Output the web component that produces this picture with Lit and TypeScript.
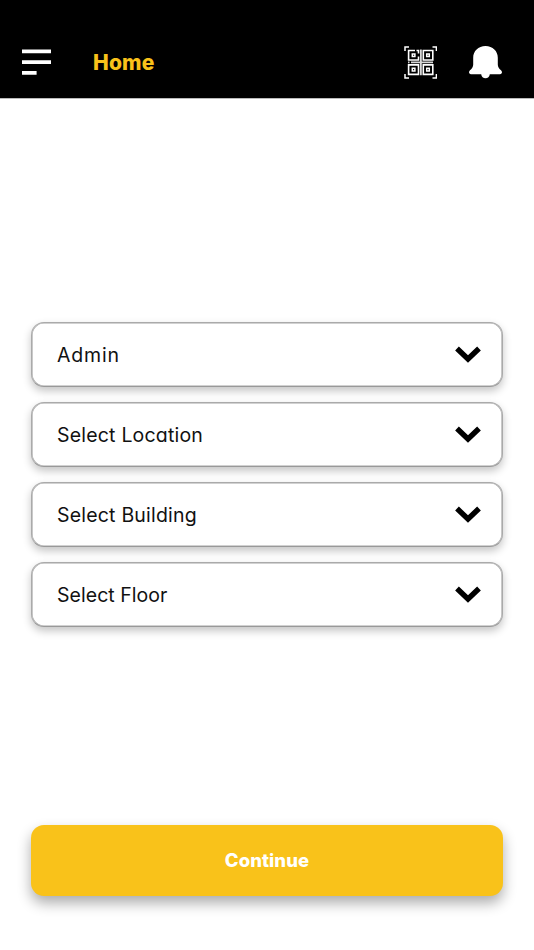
import { LitElement, html, css } from "lit";
import { customElement, property } from "lit/decorators.js";
import { styleMap } from "lit/directives/style-map.js";

@customElement("select-field")
class SelectField extends LitElement {
  @property() label = "";
  @property({ type: Number }) tracking = 0;

  static styles = css`
    :host { display: block; }
    .field {
      box-sizing: border-box;
      width: 472px;
      height: 65px;
      padding: 0 21px 0 25px;
      display: flex;
      align-items: center;
      justify-content: space-between;
      background: #fff;
      border: 1px solid #aaa;
      border-bottom-color: #999;
      border-radius: 13px;
      box-shadow: inset 0 0 0 0.6px #a4a4a4, 0 4px 8px rgba(0, 0, 0, 0.23);
    }
    .label { font-size: 19.5px; line-height: 30px; color: #111; white-space: nowrap; }
    .chevron { display: block; width: 26px; height: 17px; }
  `;

  render() {
    return html`<div class="field">
      <span class="label" style=${styleMap({ letterSpacing: `${this.tracking}px` })}>${this.label}</span>
      <svg class="chevron" viewBox="0 0 26 17"><path d="M2 2.5 13 13 24 2.5" fill="none" stroke="#000" stroke-width="5.4"/></svg>
    </div>`;
  }
}

@customElement("app-root")
class AppRoot extends LitElement {
  static styles = css`
    :host {
      display: flex;
      flex-direction: column;
      width: 534px;
      height: 950px;
      overflow: hidden;
      background: #fff;
      font-family: Inter, "Open Sans", sans-serif;
      font-feature-settings: "cv11" 1;
    }
    .bar {
      box-sizing: border-box;
      height: 98px;
      flex: none;
      padding: 26px 32px 0 22px;
      display: flex;
      align-items: center;
      background: #000;
      box-shadow: 0 1px 0 #bbb;
    }
    .menu { width: 29px; height: 26px; display: block; }
    .title { margin: 0 auto 0 42px; padding-top: 2px; font-size: 21px; font-weight: 800; line-height: 30px; letter-spacing: 0.2px; color: #f9c21a; }
    .qr { width: 33px; height: 33px; display: block; margin-right: 32px; }
    .bell { width: 33px; height: 33px; display: block; }
    .fields { margin: 224px 0 0 31px; display: grid; gap: 15px; }
    .go {
      margin: auto 31px 54px;
      height: 71px;
      flex: none;
      padding: 0 0 1px;
      border: 0;
      border-radius: 13px;
      background: #f9c21a;
      color: #fff;
      font: 800 18.5px/27px Inter, "Open Sans", sans-serif;
      letter-spacing: 0.05px;
      font-feature-settings: "cv11" 1;
      box-shadow: 0 7px 14px rgba(0, 0, 0, 0.33);
    }
  `;

  private fields = [
    { label: "Admin", tracking: 0.8 },
    { label: "Select Location", tracking: 0.2 },
    { label: "Select Building", tracking: 0.2 },
    { label: "Select Floor", tracking: 0.04 },
  ];

  render() {
    return html`
      <header class="bar">
        <svg class="menu" viewBox="0 0 29 26" fill="#fff"><path d="M0 .6h29v3.6H0zM0 11.3h29v3.6H0zM0 22.1h14.6v3.6H0z"/></svg>
        <span class="title">Home</span>
        <svg class="qr" viewBox="0 0 33 33" fill="none" stroke="#fff">
          <path d="M1 5V1h4M28.500 1h3.900v4M32.400 28v4h-3.900M5 32H1v-4" stroke-width="1.5"/>
          <path d="M11 4.500H4.600v9.500H14.500V10.500M14.500 7.500V4.500h-2M19.300 4.500h9.500V14h-9.500zM4.600 18.900h9.900v9.500H4.600zM19.300 18.900h9.500v9.500h-9.500z" stroke-width="1.6"/>
          <path d="M8.300 7.900h2.600v2.600H8.300zM22.700 7.900h2.600v2.600h-2.600zM8.300 22.300h2.600v2.600H8.300zM22.700 22.300h2.600v2.600h-2.600z" stroke-width="1.5"/>
          <path d="M16.900 3.500v25.700M7 16.400h22M4 16.400h1.500" stroke="#d8d8d8" stroke-width="1.8"/>
        </svg>
        <svg class="bell" viewBox="0 0 33 33" fill="#fff"><path d="M16.5 0C9.300 0 4.200 5.100 4.200 11.800v6.700c0 2.300-1 4-3.200 5.800-1.600 1.400-1.200 3.900 1 3.900h10.200c.3 2.500 2 4.100 4.300 4.100s4-1.600 4.300-4.100H31c2.200 0 2.600-2.500 1-3.900-2.200-1.800-3.200-3.500-3.200-5.800v-6.700C28.800 5.100 23.700 0 16.500 0z"/></svg>
      </header>
      <main class="fields">
        ${this.fields.map((f) => html`<select-field .label=${f.label} .tracking=${f.tracking}></select-field>`)}
      </main>
      <button class="go">Continue</button>
    `;
  }
}
